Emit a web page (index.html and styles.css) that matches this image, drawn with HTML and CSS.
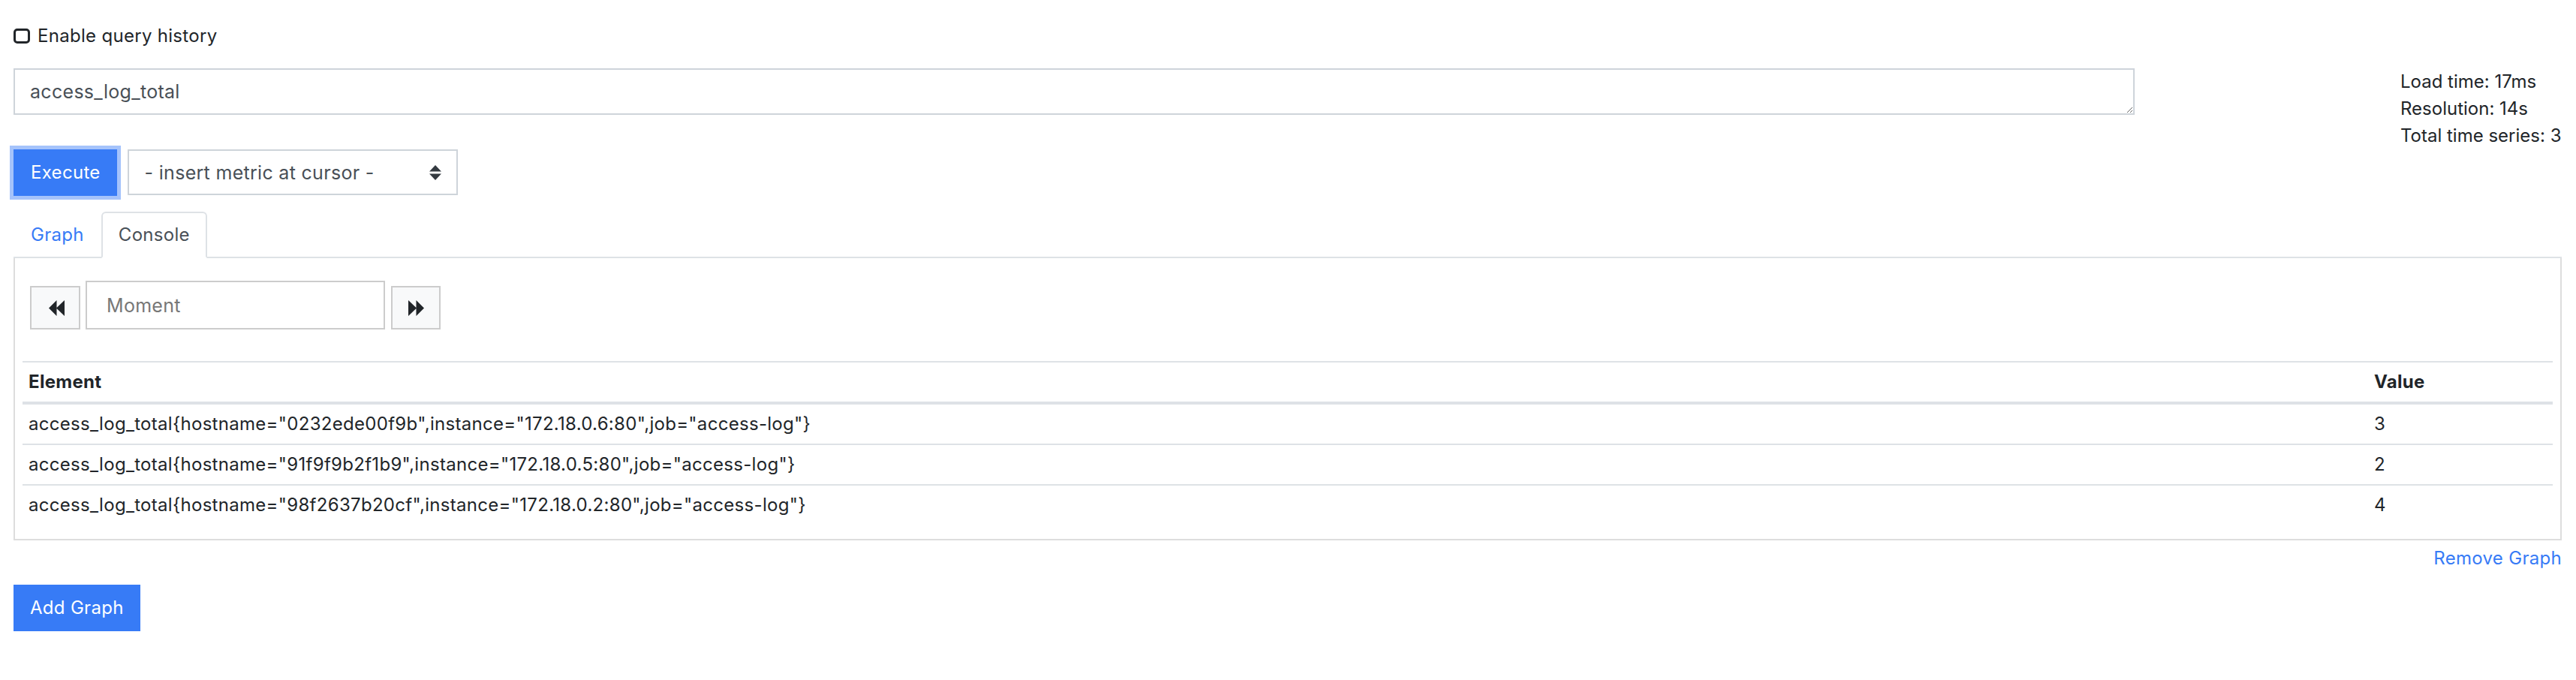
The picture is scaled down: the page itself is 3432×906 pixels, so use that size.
FILE: index.html
```html
<!DOCTYPE html>
<html lang="en">
<head>
<meta charset="utf-8">
<title>Prometheus Time Series Collection and Processing Server</title>
<link rel="stylesheet" href="styles.css">
</head>
<body>
<div class="page">
  <label class="history">
    <input type="checkbox" class="history-check">
    <span>Enable query history</span>
  </label>

  <div class="query">
    <div class="query-main">
      <textarea class="expr" rows="1">access_log_total</textarea>
      <div class="exec-row">
        <button class="btn btn-primary btn-focus" type="button">Execute</button>
        <div class="metric-select">
          <span>- insert metric at cursor -</span>
          <svg class="select-arrows" width="16" height="20" viewBox="0 0 16 20"><path d="M8 0 L16 8.5 L0 8.5 Z M0 11.5 L16 11.5 L8 20 Z" fill="#343a40"/></svg>
        </div>
      </div>
    </div>
    <div class="stats">
      <div>Load time: 17ms</div>
      <div>Resolution: 14s</div>
      <div>Total time series: 3</div>
    </div>
  </div>

  <ul class="tabs">
    <li class="tab"><a class="tab-link">Graph</a></li>
    <li class="tab active"><a class="tab-link">Console</a></li>
  </ul>
  <div class="panel">
    <div class="moment-row">
      <button class="nav-btn" type="button" aria-label="Back">
        <svg width="21" height="21" viewBox="0 0 21 21"><path d="M0 10.5 L10.5 0 L10.5 21 Z M10 10.5 L21 0 L21 21 Z" fill="#212529"/></svg>
      </button>
      <input class="moment" type="text" placeholder="Moment">
      <button class="nav-btn nav-next" type="button" aria-label="Forward">
        <svg width="21" height="21" viewBox="0 0 21 21"><path d="M21 10.5 L10.5 0 L10.5 21 Z M11 10.5 L0 0 L0 21 Z" fill="#212529"/></svg>
      </button>
    </div>
    <table class="results">
      <thead>
        <tr><th>Element</th><th class="value-col">Value</th></tr>
      </thead>
      <tbody>
        <tr><td>access_log_total{hostname="0232ede00f9b",instance="172.18.0.6:80",job="access-log"}</td><td>3</td></tr>
        <tr><td>access_log_total{hostname="91f9f9b2f1b9",instance="172.18.0.5:80",job="access-log"}</td><td>2</td></tr>
        <tr><td>access_log_total{hostname="98f2637b20cf",instance="172.18.0.2:80",job="access-log"}</td><td>4</td></tr>
      </tbody>
    </table>
  </div>
  <div class="remove-row"><a class="link">Remove Graph</a></div>
  <button class="btn btn-primary add-btn" type="button">Add Graph</button>
</div>
</body>
</html>
```

FILE: styles.css
```css
html, body {
  margin: 0;
  padding: 0;
  background: #fff;
}

body {
  font-family: Inter, "Noto Sans", "Liberation Sans", sans-serif;
  font-size: 24px;
  line-height: 36px;
  letter-spacing: 0.3px;
  color: #212529;
}

.page {
  padding: 30px 19px 0 18px;
}

.history {
  display: flex;
  align-items: center;
  height: 36px;
}

.history-check {
  appearance: none;
  -webkit-appearance: none;
  width: 22px;
  height: 20px;
  margin: 0 10px 0 0;
  border: 3px solid #212529;
  border-radius: 5px;
  box-sizing: border-box;
  background: #fff;
}

.query {
  display: grid;
  grid-template-columns: 1fr 215px;
  column-gap: 354px;
  margin-top: 25px;
}

.expr {
  display: block;
  box-sizing: border-box;
  width: 100%;
  height: 62px;
  margin: 0;
  padding: 11px 20px;
  border: 2px solid #ced4da;
  border-radius: 0;
  font-family: inherit;
  font-size: 25px;
  line-height: 36px;
  letter-spacing: 0.3px;
  color: #495057;
  resize: vertical;
  outline: none;
}

.exec-row {
  display: flex;
  align-items: flex-start;
  margin-top: 46px;
}

.btn {
  font-family: inherit;
  font-size: 24px;
  line-height: 36px;
  letter-spacing: 0.3px;
  border: none;
  border-radius: 0;
  margin: 0;
  cursor: pointer;
}

.btn-primary {
  background: #377bf6;
  color: #fff;
  height: 62px;
  padding: 0 22px 0 23px;
}

.btn-focus {
  box-shadow: 0 0 0 5px rgba(55, 123, 246, 0.45);
}

.metric-select {
  box-sizing: border-box;
  display: flex;
  align-items: center;
  justify-content: space-between;
  width: 440px;
  height: 61px;
  margin-left: 14px;
  padding: 0 20px 0 21px;
  border: 2px solid #ced4da;
  font-size: 25px;
  color: #495057;
  white-space: nowrap;
}

.select-arrows {
  display: block;
}

.stats {
  white-space: nowrap;
  letter-spacing: 0;
}

.tabs {
  display: flex;
  list-style: none;
  margin: 21px 0 0 0;
  padding: 0;
  border-bottom: 2px solid #dee2e6;
}

.tab {
  margin-bottom: -2px;
}

.tab-link {
  display: block;
  padding: 11px 21px;
  border: 2px solid transparent;
  border-top-left-radius: 6px;
  border-top-right-radius: 6px;
  color: #377bf6;
  cursor: pointer;
}

.tab.active .tab-link {
  color: #495057;
  background: #fff;
  border-color: #dee2e6 #dee2e6 #fff;
}

.panel {
  border: 2px solid #dddddd;
  border-top: none;
  padding: 30px 10px 19px;
}

.moment-row {
  display: flex;
  align-items: flex-end;
  padding-left: 10px;
}

.nav-btn {
  box-sizing: border-box;
  display: flex;
  align-items: center;
  justify-content: center;
  width: 67px;
  height: 58px;
  margin: 0;
  padding: 0 0 0 4px;
  background: #f8f9fa;
  border: 2px solid #cccccc;
  border-radius: 0;
}

.nav-next {
  width: 66px;
  padding: 0;
  margin-left: 8px;
}

.nav-btn svg {
  display: block;
}

.moment {
  box-sizing: border-box;
  width: 399px;
  height: 65px;
  margin: 0 0 0 7px;
  padding: 0 26px;
  border: 2px solid #cccccc;
  border-radius: 0;
  font-family: inherit;
  font-size: 25px;
  letter-spacing: 0.3px;
  color: #495057;
  outline: none;
}

.moment::placeholder {
  color: #777777;
}

.results {
  width: 100%;
  margin-top: 42px;
  border-collapse: separate;
  border-spacing: 0;
}

.results th,
.results td {
  padding: 8px;
  text-align: left;
  vertical-align: top;
  white-space: nowrap;
}

.results th {
  font-weight: 700;
  border-top: 2px solid #dee2e6;
  border-bottom: 2px solid #dee2e6;
}

.results td {
  border-top: 2px solid #dee2e6;
}

.results .value-col {
  width: 230px;
}

.remove-row {
  margin-top: 6px;
  text-align: right;
}

.link {
  color: #377bf6;
  cursor: pointer;
}

.add-btn {
  display: block;
  margin-top: 17px;
  padding: 0 22px;
}
```
